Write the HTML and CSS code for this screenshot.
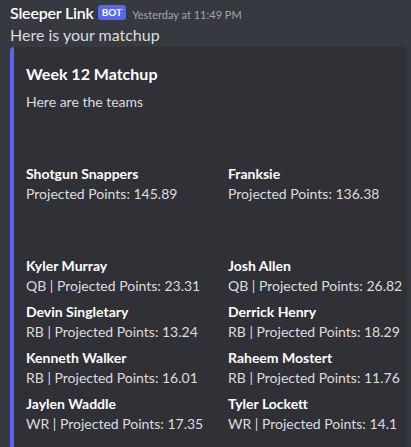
FILE: index.html
```html
<!DOCTYPE html>
<html>
<head>
<meta charset="utf-8">
<link rel="stylesheet" href="styles.css">
</head>
<body>
<div class="message">
  <div class="header">
    <span class="username">Sleeper Link</span>
    <span class="bot">BOT</span>
    <span class="timestamp">Yesterday at 11:49 PM</span>
  </div>
  <div class="content">Here is your matchup</div>
  <div class="embed">
    <div class="title">Week 12 Matchup</div>
    <div class="description">Here are the teams</div>
    <div class="fields">
      <div class="field"><div class="fname">&#8203;</div><div class="fvalue">&#8203;</div></div>
      <div class="field"><div class="fname">&#8203;</div><div class="fvalue">&#8203;</div></div>
      <div class="field"><div class="fname">Shotgun Snappers</div><div class="fvalue">Projected Points: 145.89</div></div>
      <div class="field"><div class="fname">Franksie</div><div class="fvalue">Projected Points: 136.38</div></div>
      <div class="field"><div class="fname">&#8203;</div><div class="fvalue">&#8203;</div></div>
      <div class="field"><div class="fname">&#8203;</div><div class="fvalue">&#8203;</div></div>
      <div class="field"><div class="fname">Kyler Murray</div><div class="fvalue">QB | Projected Points: 23.31</div></div>
      <div class="field"><div class="fname">Josh Allen</div><div class="fvalue">QB | Projected Points: 26.82</div></div>
      <div class="field"><div class="fname">Devin Singletary</div><div class="fvalue">RB | Projected Points: 13.24</div></div>
      <div class="field"><div class="fname">Derrick Henry</div><div class="fvalue">RB | Projected Points: 18.29</div></div>
      <div class="field"><div class="fname">Kenneth Walker</div><div class="fvalue">RB | Projected Points: 16.01</div></div>
      <div class="field"><div class="fname">Raheem Mostert</div><div class="fvalue">RB | Projected Points: 11.76</div></div>
      <div class="field"><div class="fname">Jaylen Waddle</div><div class="fvalue">WR | Projected Points: 17.35</div></div>
      <div class="field"><div class="fname">Tyler Lockett</div><div class="fvalue">WR | Projected Points: 14.1</div></div>
    </div>
  </div>
</div>
</body>
</html>
```
FILE: styles.css
```css
html, body {
  margin: 0;
  padding: 0;
  background: #36393f;
  font-family: Lato, "Noto Sans", sans-serif;
  overflow: hidden;
}
.message {
  padding: 2px 8px 0 10px;
}
.header {
  display: flex;
  align-items: center;
  height: 22px;
  white-space: nowrap;
}
.username {
  color: #ffffff;
  font-size: 16px;
  font-weight: 600;
  line-height: 22px;
  letter-spacing: -0.2px;
}
.bot {
  background: #5865f2;
  color: #fff;
  font-size: 10px;
  font-weight: 700;
  line-height: 15px;
  height: 15px;
  padding: 0 4px;
  border-radius: 3px;
  margin-left: 4px;
  margin-top: -1px;
}
.timestamp {
  color: #a3a6aa;
  font-size: 11px;
  margin-left: 6px;
  margin-top: 2px;
}
.content {
  color: #dcddde;
  font-size: 16px;
  line-height: 22px;
}
.embed {
  margin-top: 1px;
  background: #2f3136;
  border-left: 4px solid #5865f2;
  border-radius: 4px;
  padding: 8px 16px 16px 12px;
  width: 365px;
}
.title {
  color: #fff;
  font-size: 16px;
  font-weight: 700;
  line-height: 22px;
  margin-top: 8px;
}
.description {
  color: #dcddde;
  font-size: 14px;
  line-height: 18px;
  margin-top: 8px;
}
.fields {
  margin-top: 8px;
  display: grid;
  grid-template-columns: 202px 1fr;
  row-gap: 8px;
  white-space: nowrap;
}
.fname {
  color: #fff;
  font-size: 14px;
  font-weight: 700;
  line-height: 18px;
  margin-bottom: 2px;
}
.fvalue {
  color: #dcddde;
  font-size: 14px;
  line-height: 18px;
}
```
